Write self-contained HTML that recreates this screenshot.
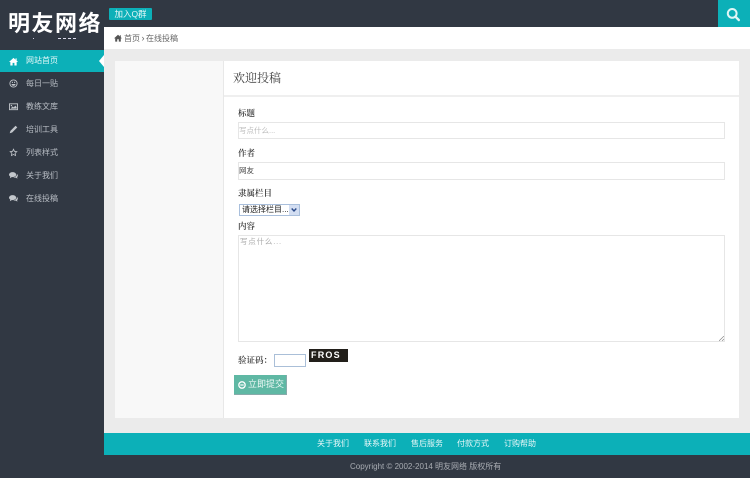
<!DOCTYPE html>
<html lang="zh"><head><meta charset="utf-8"><title>在线投稿</title>
<style>
*{box-sizing:border-box}
html,body{margin:0;padding:0}
body{width:750px;height:478px;position:relative;overflow:hidden;background:#313843;font-family:"Liberation Sans","Noto Sans CJK SC",sans-serif;font-size:8px;color:#444}
.a{position:absolute;white-space:nowrap}
.serif{font-family:"Noto Serif CJK SC","Liberation Serif",serif}
.nav{left:0;width:104px;height:23px;line-height:23px;color:#b9bec5;font-size:8px}
.nav span{position:absolute;left:26px;top:0}
.nav svg{position:absolute;left:9px;top:7px;width:9px;height:9px;fill:#c3c7cc}
.label{left:238px;font-size:8.5px;color:#333;line-height:12px;font-family:"Noto Serif CJK SC","Liberation Serif",serif;font-weight:600}
.field{left:238px;width:487px;background:#fff;border:1px solid #e6e6e6;font-size:7.5px;padding-left:0}
.foot{top:433px;color:#e8f7f8;font-size:8px;line-height:22px}
</style></head><body>
<div class="a" style="left:8px;top:7px;font-size:22px;line-height:30px;font-weight:700;color:#fff;letter-spacing:1.500px;font-family:'Noto Sans CJK SC',sans-serif">明友网络</div>
<div class="a" style="left:33px;top:38px;width:1px;height:1px;background:#ccd"></div>
<div class="a" style="left:58px;top:38px;width:18px;height:1px;background:repeating-linear-gradient(90deg,#dde 0 3px,transparent 3px 5px)"></div>
<div class="a" style="left:109px;top:8px;width:43px;height:12px;background:#0cb0b8;color:#e6f8f8;font-size:8.5px;line-height:12px;text-align:center;border-radius:1px">加入Q群</div>
<div class="a" style="left:718px;top:0;width:32px;height:27px;background:#0cb0b8"></div>
<svg class="a" style="left:726px;top:7px" width="15" height="15" viewBox="0 0 15 15"><circle cx="6.200" cy="6.400" r="4.400" fill="none" stroke="#dff6f6" stroke-width="2"/><path d="M9.600 9.800l3.200 3.200" stroke="#dff6f6" stroke-width="2.400" stroke-linecap="round"/></svg>

<div class="a" style="left:104px;top:27px;width:646px;height:22px;background:#fff"></div>
<svg class="a" style="left:114px;top:34px" width="8" height="8" viewBox="0 0 10 10"><path d="M5 1L0 5.500h1.500V9.500h2.500V6.500h2V9.500h2.500V5.500H10L8.500 4V1.500H7.300V3z" fill="#555"/></svg>
<div class="a" style="left:124px;top:27px;line-height:22px;font-size:8px;color:#666">首页<span style="margin:0 1.500px;font-size:9px">&#8250;</span>在线投稿</div>
<div class="a" style="left:104px;top:49px;width:646px;height:384px;background:#ebebeb"></div>
<div class="a" style="left:115px;top:61px;width:624px;height:357px;background:#fff"></div>
<div class="a" style="left:115px;top:61px;width:109px;height:357px;background:#f8f8f8;border-right:1px solid #e8e8e8"></div>
<div class="a" style="left:224px;top:95px;width:515px;height:2px;background:#efefef"></div>
<div class="a serif" style="left:233px;top:69px;font-size:12px;line-height:18px;color:#444">欢迎投稿</div>

<div class="a nav" style="top:50px;height:22px;line-height:22px;background:#0cb0b8;color:#e4f7f8"><svg viewBox="0 0 10 10" style="fill:#fff;top:6.500px"><path d="M5 1L0 5.500h1.500V9.500h2.500V6.500h2V9.500h2.500V5.500H10L8.500 4V1.500H7.300V3z"/></svg><span>网站首页</span></div>
<div class="a" style="left:99px;top:55px;width:0;height:0;border:6px solid transparent;border-left:0;border-right:5px solid #fff"></div>
<div class="a nav" style="top:72px"><svg viewBox="0 0 10 10"><path fill-rule="evenodd" d="M5 .5a4.500 4.500 0 1 0 0 9 4.500 4.500 0 0 0 0-9zM5 1.500a3.500 3.500 0 1 1 0 7 3.500 3.500 0 0 1 0-7zM3.200 3h1.100v1.500H3.200zM5.700 3h1.100v1.500H5.700zM2.700 5.500h4.600C7 7 6 7.500 5 7.500S3 7 2.700 5.500z"/></svg><span>每日一贴</span></div>
<div class="a nav" style="top:95px"><svg viewBox="0 0 10 10"><path fill-rule="evenodd" d="M0 1.500h10v7.500H0zM1 2.500v5.500h8V2.500zM1.700 7.300L4 4.800l1.300 1.200 1.700-2 1.500 1.700v1.600zM2.700 3.200a.8.800 0 1 1 0 1.600.8.800 0 0 1 0-1.600z"/></svg><span>教练文库</span></div>
<div class="a nav" style="top:118px"><svg viewBox="0 0 10 10"><path d="M7.300.8l1.900 1.900-5.700 5.700L.8 9.200l.8-2.700z"/></svg><span>培训工具</span></div>
<div class="a nav" style="top:141px"><svg viewBox="0 0 10 10"><path fill-rule="evenodd" d="M5 .3l1.400 3 3.300.4-2.400 2.200.6 3.300L5 7.600 2.100 9.200l.6-3.300L.3 3.700l3.300-.4zM5 2.500l-.8 1.700-1.900.2 1.400 1.300-.4 1.900L5 6.700l1.700.9-.4-1.900 1.400-1.300-1.900-.2z"/></svg><span>列表样式</span></div>
<div class="a nav" style="top:164px"><svg viewBox="0 0 10 10"><ellipse cx="4" cy="4" rx="4" ry="2.800"/><path d="M1.500 5.500L1 8l2.500-1.500zM8.800 3.300C10 4 10.300 5.700 9 6.700l.4 1.800-2-1.200c-1 .2-2 0-2.700-.5 2.300 0 4.400-1.300 4.100-3.500z"/></svg><span>关于我们</span></div>
<div class="a nav" style="top:187px"><svg viewBox="0 0 10 10"><ellipse cx="4" cy="4" rx="4" ry="2.800"/><path d="M1.500 5.500L1 8l2.500-1.500zM8.800 3.300C10 4 10.300 5.700 9 6.700l.4 1.800-2-1.200c-1 .2-2 0-2.700-.5 2.300 0 4.400-1.300 4.100-3.500z"/></svg><span>在线投稿</span></div>

<div class="a label" style="top:107px">标题</div>
<div class="a field" style="top:122px;height:17px;line-height:15px;color:#bbb">写点什么...</div>
<div class="a label" style="top:147px">作者</div>
<div class="a field" style="top:162px;height:18px;line-height:16px;color:#444">网友</div>
<div class="a label" style="top:187px">隶属栏目</div>
<div class="a" style="left:239px;top:204px;width:61px;height:12px;background:#fff;border:1px solid #a9bfdc;font-size:8px;line-height:10px;color:#222;padding-left:2px;overflow:hidden">请选择栏目...</div>
<div class="a" style="left:289px;top:205px;width:10px;height:10px;background:#d3def2"></div>
<svg class="a" style="left:291px;top:207px" width="6" height="6" viewBox="0 0 6 6"><path d="M.7 1.500L3 4l2.300-2.500" fill="none" stroke="#2a4a8a" stroke-width="1.400"/></svg>
<div class="a label" style="top:220px">内容</div>
<div class="a field" style="top:235px;height:107px;line-height:11px;color:#aaa;letter-spacing:.8px;padding-left:1px">写点什么...</div>
<svg class="a" style="left:719px;top:336px" width="5" height="5" viewBox="0 0 5 5"><path d="M0 5L5 0M3 5L5 3" stroke="#888" stroke-width=".7"/></svg>
<div class="a label" style="top:354px">验证码：</div>
<div class="a" style="left:274px;top:354px;width:32px;height:13px;background:#fff;border:1px solid #aabfd8"></div>
<div class="a" style="left:309px;top:349px;width:39px;height:13px;background:#221f1a;color:#fff;font-size:9px;font-weight:700;line-height:13px;padding-left:2px;letter-spacing:1.200px">FROS</div>
<div class="a" style="left:234px;top:375px;width:53px;height:20px;background:#5fb8a4;border:1px solid #8aa;border-width:0 1px 1px 0;color:#eef9f6;font-size:9px;line-height:19px;padding-left:14px">立即提交</div>
<svg class="a" style="left:238px;top:381px" width="8" height="8" viewBox="0 0 8 8"><circle cx="4" cy="4" r="3.200" fill="none" stroke="#fff" stroke-width="1.300"/><path d="M2.300 4h3.400" stroke="#fff" stroke-width="1.200"/></svg>

<div class="a" style="left:104px;top:433px;width:646px;height:22px;background:#0cb0b8"></div>
<div class="a foot" style="left:317px">关于我们</div>
<div class="a foot" style="left:364px">联系我们</div>
<div class="a foot" style="left:411px">售后服务</div>
<div class="a foot" style="left:457px">付款方式</div>
<div class="a foot" style="left:504px">订购帮助</div>
<div class="a" style="left:350px;top:455px;line-height:23px;font-size:8px;color:#a9adb3">Copyright © 2002-2014 明友网络 版权所有</div>
</body></html>
